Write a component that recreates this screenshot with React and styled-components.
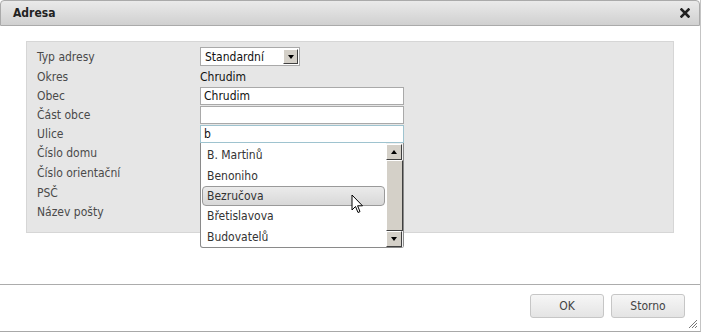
import React from 'react';
import styled, { createGlobalStyle } from 'styled-components';

const GlobalStyle = createGlobalStyle`
  html, body {
    margin: 0;
    padding: 0;
    background: #fff;
  }
  body {
    font-family: "DejaVu Sans Condensed", "DejaVu Sans", Verdana, sans-serif;
    font-size: 12px;
    color: #222;
  }
`

const Dialog = styled.div`
  width: 700px;
  height: 331px;
  border-right: 1px solid #c4c4c4;
  border-bottom: 1px solid #a8a8a8;
  display: flex;
  flex-direction: column;
  position: relative;
  background: #fff;
`

const TitleBar = styled.div`
  height: 24px;
  display: flex;
  align-items: center;
  justify-content: space-between;
  padding: 0 9px 0 12px;
  background: linear-gradient(#eaeaea, #d0d0d0);
  border: 1px solid #aaa;
  border-radius: 4px 4px 0 0;
  font-weight: bold;
  font-size: 12px;
  color: #222;
`

const Body = styled.div`
  flex: 1;
  padding: 15px 26px 0 26px;
`

const Panel = styled.div`
  background: #e6e6e6;
  border: 1px solid #d6d6d6;
  padding: 4px 10px 10px 10px;
  display: grid;
  grid-template-columns: 163px 1fr;
`

const Label = styled.div`
  height: ${p => p.h}px;
  display: flex;
  align-items: center;
  color: #4a4a4a;
`

const Value = styled.div`
  height: ${p => p.h}px;
  display: flex;
  align-items: center;
  position: relative;
`

const SelectBox = styled.div`
  width: 100px;
  height: 19px;
  box-sizing: border-box;
  border: 1px solid #a9a9a9;
  background: #fff;
  display: flex;
  align-items: center;
  justify-content: space-between;
  padding-left: 4px;
`

const ArrowButton = styled.div`
  width: 15px;
  height: 15px;
  margin-right: 1px;
  box-sizing: border-box;
  background: #d4d0c8;
  border: 1px solid;
  border-color: #fff #404040 #404040 #fff;
  display: flex;
  align-items: center;
  justify-content: center;
`

const Triangle = styled.div`
  width: 0;
  height: 0;
  border-left: 3px solid transparent;
  border-right: 3px solid transparent;
  ${p => p.up ? 'border-bottom: 4px solid #000;' : 'border-top: 4px solid #000;'}
`

const TextInput = styled.div`
  width: 204px;
  height: 18px;
  box-sizing: border-box;
  border: 1px solid ${p => p.focus ? '#9ec3cf' : '#a9a9a9'};
  background: #fff;
  padding-left: 3px;
  display: flex;
  align-items: center;
  color: #111;
`

const Plain = styled.span`
  color: #111;
`

const Dropdown = styled.div`
  position: absolute;
  top: 100%;
  left: 0;
  width: 204px;
  height: 105px;
  box-sizing: border-box;
  border: 1px solid #8a8a8a;
  border-top: none;
  border-radius: 0 0 3px 3px;
  background: #fff;
  display: flex;
  z-index: 5;
`

const List = styled.div`
  flex: 1;
  padding: 2px 1px 0 1px;
  display: flex;
  flex-direction: column;
`

const Item = styled.div`
  height: 21px;
  box-sizing: border-box;
  display: flex;
  align-items: center;
  padding-left: 5px;
  color: #333;
  border-radius: 4px;
  ${p => p.active && `
    background: linear-gradient(#ebebeb, #d8d8d8);
    border: 1px solid #9a9a9a;
    padding-left: 4px;
  `}
`

const Scrollbar = styled.div`
  width: 17px;
  display: flex;
  flex-direction: column;
  background: #f0f0f0;
  padding-top: 1px;
`

const ScrollButton = styled(ArrowButton)`
  width: 16px;
  height: 16px;
  margin: 0;
`

const Thumb = styled.div`
  flex: 1;
  background: #d4d0c8;
  border: 1px solid;
  border-color: #fff #404040 #404040 #fff;
`

const Cursor = styled.svg`
  position: absolute;
  left: 150px;
  top: 51px;
`

const Footer = styled.div`
  height: 47px;
  border-top: 1px solid #acacac;
  display: flex;
  justify-content: flex-end;
  align-items: flex-start;
  padding: 9px 15px 0 0;
  gap: 7px;
  box-sizing: border-box;
`

const Button = styled.button`
  width: 74px;
  height: 24px;
  background: linear-gradient(#f6f6f6, #e4e4e4);
  border: 1px solid #c6c6c6;
  border-radius: 3px;
  font-family: inherit;
  font-size: 12px;
  color: #444;
`

const Grip = styled.svg`
  position: absolute;
  right: 2px;
  bottom: 2px;
`

const rows = [
  { label: 'Typ adresy', h: 21, kind: 'select', value: 'Standardní' },
  { label: 'Okres', h: 19, kind: 'text', value: 'Chrudim' },
  { label: 'Obec', h: 19, kind: 'input', value: 'Chrudim' },
  { label: 'Část obce', h: 19, kind: 'input', value: '' },
  { label: 'Ulice', h: 19, kind: 'combo', value: 'b' },
  { label: 'Číslo domu', h: 20 },
  { label: 'Číslo orientační', h: 20 },
  { label: 'PSČ', h: 19 },
  { label: 'Název pošty', h: 20 },
]

const streets = ['B. Martinů', 'Benoniho', 'Bezručova', 'Břetislavova', 'Budovatelů']

const renderValue = row => {
  if (row.kind === 'select') {
    return (
      <SelectBox>
        <Plain>{row.value}</Plain>
        <ArrowButton><Triangle /></ArrowButton>
      </SelectBox>
    )
  }
  if (row.kind === 'text') return <Plain>{row.value}</Plain>
  if (row.kind === 'input') return <TextInput>{row.value}</TextInput>
  if (row.kind === 'combo') {
    return (
      <>
        <TextInput focus>{row.value}</TextInput>
        <Dropdown>
          <List>
            {streets.map(s => <Item key={s} active={s === 'Bezručova'}>{s}</Item>)}
          </List>
          <Scrollbar>
            <ScrollButton><Triangle up /></ScrollButton>
            <Thumb />
            <ScrollButton><Triangle /></ScrollButton>
          </Scrollbar>
          <Cursor width="13" height="20" viewBox="0 0 13 20">
            <path d="M1 1 L1 16 L4.5 12.5 L7 18.5 L9 17.6 L6.6 11.8 L11.5 11.8 Z" fill="#fff" stroke="#000" strokeWidth="1" strokeLinejoin="miter" />
          </Cursor>
        </Dropdown>
      </>
    )
  }
  return null
}

const App = () => (
  <>
    <GlobalStyle />
    <Dialog>
      <TitleBar>
        <span>Adresa</span>
        <svg width="10" height="10" viewBox="0 0 10 10">
          <path d="M1.5 1.5 L8.5 8.5 M8.5 1.5 L1.5 8.5" stroke="#222" strokeWidth="2.6" strokeLinecap="square" />
        </svg>
      </TitleBar>
      <Body>
        <Panel>
          {rows.map(row => (
            <React.Fragment key={row.label}>
              <Label h={row.h}>{row.label}</Label>
              <Value h={row.h}>{renderValue(row)}</Value>
            </React.Fragment>
          ))}
        </Panel>
      </Body>
      <Footer>
        <Button>OK</Button>
        <Button>Storno</Button>
      </Footer>
      <Grip width="10" height="10" viewBox="0 0 10 10">
        <path d="M9 1 L1 9 M9 4 L4 9 M9 7 L7 9" stroke="#777" strokeWidth="1" />
      </Grip>
    </Dialog>
  </>
)

export default App
